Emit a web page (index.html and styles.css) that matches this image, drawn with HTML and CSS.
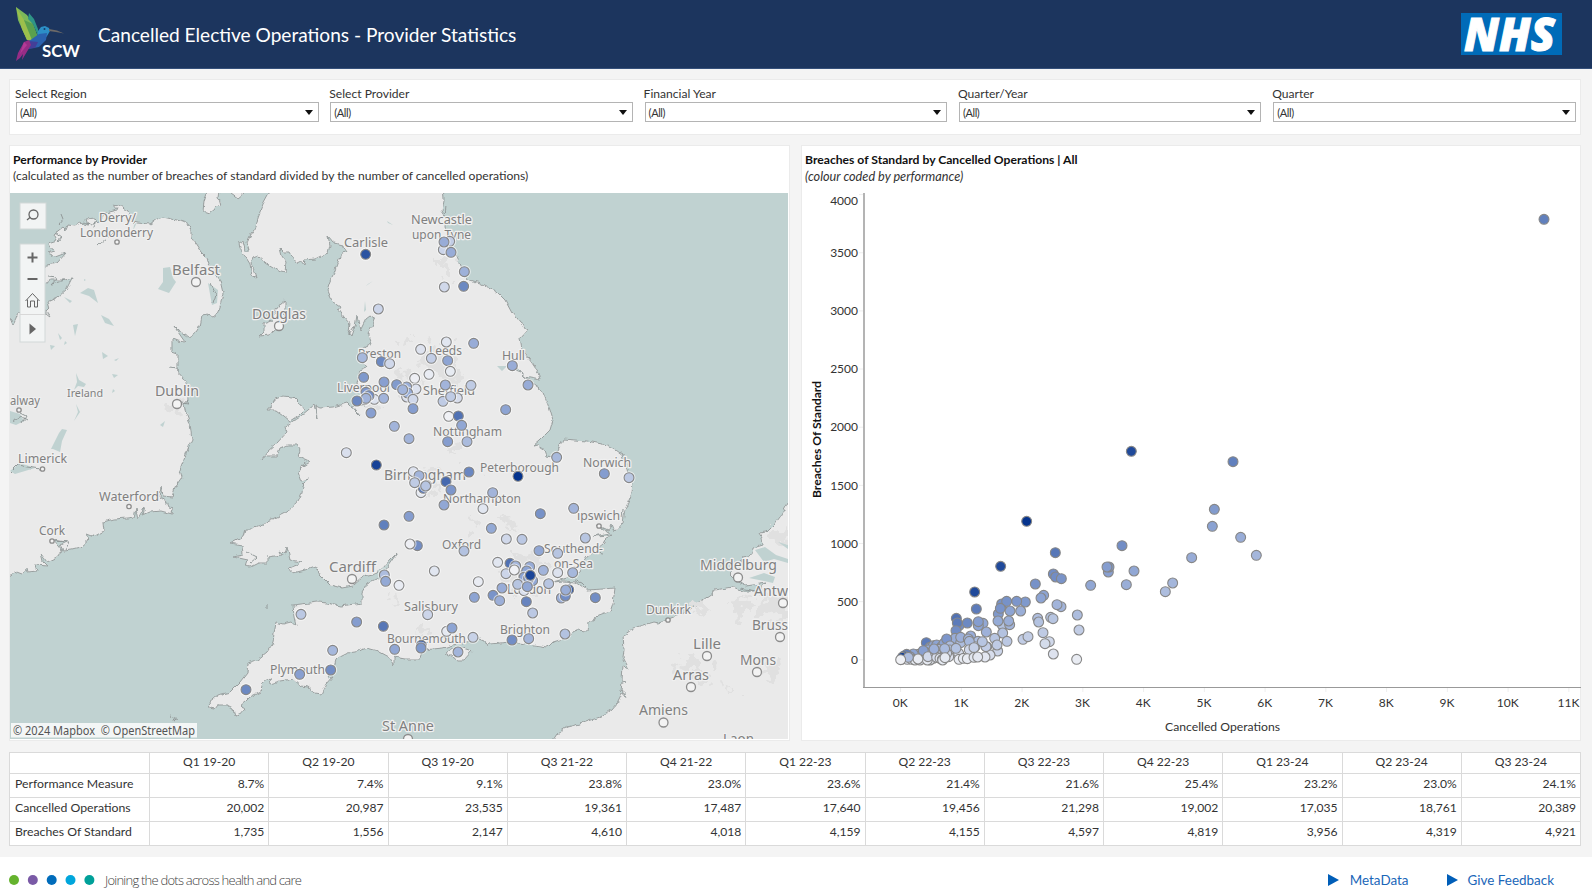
FILE: index.html
```html
<!DOCTYPE html>
<html lang="en">
<head>
<meta charset="utf-8">
<title>Cancelled Elective Operations - Provider Statistics</title>
<link rel="stylesheet" href="styles.css">
</head>
<body>
<header class="top">
  <svg class="scw" width="70" height="60" viewBox="14 4 70 60">
    <path fill="#7cb85a" d="M16 7 27 15 33 24 38 38 35 42 27 40 22 29 18 20z"/>
    <path fill="#9cbf4c" d="M16 7 24 20 32 40 27 40 22 29z"/>
    <path fill="#5aa04e" d="M24 20 33 24 38 38 32 40z"/>
    <path fill="#2f9586" d="M29 13 34 19 38 29 38 36 33 24 28 19z"/>
    <path fill="#2c8fc6" d="M38 31 41 27 45 26 49 28 50 31 47 36 43 41 37 41z"/>
    <path fill="#2a62ae" d="M39 34 47 33 46 40 39 47 28 49 29 41z"/>
    <path fill="#433f98" d="M29 41 38 42 35 48 26 49z"/>
    <path fill="#962d86" d="M29 40 24 42 18 53 16 61 20 58 23 54 22 60 28 50 31 45z"/>
    <path fill="#b43a96" d="M24 42 20 54 27 45z"/>
    <circle cx="44.500" cy="29" r="1" fill="#123a6a"/>
    <path fill="#6d6a68" d="M49 29 57 30.5 64 33.5 56 32 49 31z"/>
    <text class="scw-text" x="42" y="56.500" textLength="38" lengthAdjust="spacingAndGlyphs">SCW</text>
  </svg>
  <h1>Cancelled Elective Operations - Provider Statistics</h1>
  <svg class="nhs" width="101" height="42" viewBox="0 0 101 42">
    <rect width="101" height="42" fill="#006bb8"/>
    <text class="nhs-text" x="3" y="37.500" textLength="91" lengthAdjust="spacingAndGlyphs">NHS</text>
  </svg>
</header>

<main>
  <section class="panel filters">
    <label>Select Region<span class="select">(All)<i></i></span></label>
    <label>Select Provider<span class="select">(All)<i></i></span></label>
    <label>Financial Year<span class="select">(All)<i></i></span></label>
    <label>Quarter/Year<span class="select">(All)<i></i></span></label>
    <label>Quarter<span class="select">(All)<i></i></span></label>
  </section>

  <div class="charts">
    <section class="panel map-panel">
      <h2>Performance by Provider</h2>
      <p>(calculated as the number of breaches of standard divided by the number of cancelled operations)</p>
      <svg class="map" width="778" height="546" viewBox="10 193 778 546">
        <defs>
          <filter id="coast" filterUnits="userSpaceOnUse" x="0" y="183" width="798" height="566"><feTurbulence type="fractalNoise" baseFrequency=".16" numOctaves="2" seed="4"/><feDisplacementMap in="SourceGraphic" scale="5" xChannelSelector="R" yChannelSelector="G"/></filter>
          <filter id="sprawl" filterUnits="userSpaceOnUse" x="0" y="183" width="798" height="566"><feTurbulence type="fractalNoise" baseFrequency=".09" numOctaves="3" seed="9"/><feDisplacementMap in="SourceGraphic" scale="34" xChannelSelector="R" yChannelSelector="G"/></filter>
        </defs>
        <rect class="sea" x="10" y="193" width="778" height="546"/>
        <g class="land" filter="url(#coast)">
          <path d="M0 318 10 318 13 325 16 319 18 313 27 311 28 306 37 316 46 311 50 317 45 313 49 309 47 302 58 297 66 290 72 278 65 280 50 280 37 287 27 280 33 267 47 265 57 263 66 253 55 257 47 253 54 251 48 243 57 240 54 234 63 227 66 230 68 225 75 226 80 223 88 225 86 219 95 218 99 222 105 213 118 210 113 204 119 205 128 212 133 222 138 223 150 224 157 219 163 217 172 219 183 222 189 225 191 231 191 237 195 243 201 252 207 258 209 265 213 270 220 280 223 293 220 307 217 314 213 317 208 315 202 316 200 327 196 333 188 337 178 330 174 326 178 332 185 342 177 341 172 339 172 352 178 354 178 372 184 379 187 383 188 400 184 403 185 410 190 423 192 440 189 446 185 457 180 470 182 477 175 487 172 497 163 496 161 486 160 497 167 502 169 507 173 508 172 514 161 511 150 512 143 515 145 507 138 519 136 509 134 517 127 518 114 519 103 522 104 531 95 536 87 533 89 539 80 547 72 549 63 550 60 545 66 542 54 540 62 550 58 557 47 562 41 554 43 562 47 566 35 565 37 571 28 572 27 568 22 574 14 571 10 576 0 578z"/>
          <path d="M269 183 269 193 263 204 258 217 256 227 250 236 247 243 249 250 245 250 243 241 239 243 240 249 245 256 250 264 252 275 257 278 255 271 251 263 253 258 258 256 265 262 273 267 281 272 285 273 286 262 282 256 280 248 284 252 289 252 292 257 297 263 301 261 304 265 305 260 315 259 323 255 328 253 330 245 328 236 334 243 342 245 347 252 341 253 338 262 334 273 330 281 327 290 330 297 334 303 340 307 338 310 343 317 349 324 348 331 352 336 355 327 357 315 360 331 363 325 366 319 370 316 375 319 372 327 368 333 372 343 366 346 361 350 358 357 367 367 360 370 357 383 362 393 367 405 352 406 360 416 347 403 333 407 320 408 316 406 317 419 314 405 302 415 290 423 285 427 287 432 277 443 267 452 262 459 266 456 277 456 280 448 287 445 297 445 300 450 298 457 309 462 303 466 305 462 298 472 301 481 309 479 303 485 302 493 297 503 287 512 277 517 267 521 265 524 253 529 245 529 243 536 230 543 242 545 243 555 233 557 247 560 245 566 250 567 258 563 267 563 267 557 282 555 280 551 285 554 287 547 290 560 302 562 297 565 289 568 293 573 305 570 315 566 320 575 330 585 342 588 353 586 363 577 373 575 383 568 390 560 397 553 388 566 384 575 378 578 368 583 362 593 362 603 340 606 327 603 317 602 293 605 294 617 296 626 291 622 283 624 276 622 274 633 273 643 267 652 257 660 248 663 247 673 240 682 230 692 218 695 209 702 210 708 215 709 218 705 227 705 233 708 234 715 238 716 245 708 240 706 245 702 250 697 260 692 263 683 269 678 270 684 280 681 293 679 301 686 308 687 315 693 322 694 327 684 333 677 328 678 334 667 336 660 338 658 348 653 355 652 367 648 378 651 389 657 394 666 394 657 405 659 420 659 423 650 443 648 453 645 467 642 480 638 485 640 488 647 490 644 510 642 527 644 548 647 553 642 570 637 576 630 588 631 589 622 599 616 610 612 613 603 615 588 603 589 587 590 576 582 563 581 553 582 567 578 578 573 583 563 587 557 597 550 605 543 606 538 613 535 593 536 609 533 597 525 608 530 611 524 614 532 623 522 625 510 632 493 633 483 628 473 623 455 615 449 607 445 587 441 563 439 558 450 553 457 547 456 545 450 537 445 533 446 540 440 550 430 553 420 550 410 542 390 532 383 520 372 507 367 517 368 525 377 540 380 538 372 532 363 522 350 520 338 528 329 520 323 512 313 505 300 497 292 480 283 467 279 462 270 457 257 452 247 445 227 446 217 442 211 444 200 443 183z"/>
          <path d="M268 410 275 399 284 396 293 397 299 403 304 410 299 415 290 421 284 416 276 410z"/>
          <path d="M285 300 281 303 276 310 272 320 264 323 264 332 260 336 268 335 273 332 283 323 285 313z"/>
          <path d="M445 653 453 649 463 648 472 651 464 660 458 660z"/>
          <path d="M210 183 204 202 203 211 209 213 215 208 220 205 218 198 220 183zM231 185 231 193 238 198 244 193 244 185z"/>
          <path d="M798 485 788 502 780 517 774 525 767 532 759 533 762 538 763 545 753 548 752 555 743 557 740 565 730 574 737 581 746 586 766 583 757 591 743 591 733 587 715 590 713 593 700 602 683 613 670 618 658 623 653 622 633 628 623 635 624 650 623 657 629 669 622 665 621 681 627 682 622 683 621 691 628 697 622 693 617 703 612 709 600 717 583 723 567 727 557 734 547 749 798 749z"/>
        </g>
        <g class="urban" filter="url(#sprawl)">
          <path d="M425 350 440 344 457 348 455 362 462 370 455 387 443 384 434 370 423 365zM360 390 373 393 378 388 384 395 378 406 368 407zM396 373 410 372 417 380 412 395 402 396 395 386zM415 474 430 469 440 480 430 492 416 489zM503 565 515 552 537 553 548 565 547 580 536 590 514 590 501 580zM440 260 449 260 451 270 447 279 440 272zM446 429 456 428 456 442 447 443zM162 404 176 402 182 409 178 414 166 412zM736 598 750 604 740 620 733 613zM675 660 691 655 700 668 715 672 704 682 684 673zM757 600 788 591 788 616 775 622 760 616zM770 535 788 522 788 545 774 546zM447 446 455 445 457 452 449 455zM690 606 705 603 712 610 700 615zM470 520 478 518 480 526 472 529zM505 520 512 516 514 526 507 528zM400 340 408 338 408 345 402 347zM420 630 430 628 430 634 422 636zM725 690 735 688 735 695zM760 665 778 660 784 672 768 676zM490 470 497 468 498 476 491 478zM385 600 392 598 394 604z"/>
        </g>
        <g class="water">
          <path d="M163 268 170 267 173 278 176 282 169 293 158 289 163 282zM80 293 88 288 94 290 98 303 89 296zM64 297 72 301 70 303zM73 325 78 324 75 336zM101 315 109 319 114 326 105 323zM102 352 108 356 103 359zM58 333 62 338 60 340zM65 341 67 343 64 345zM10 411 20 414 24 421 16 425 10 423zM51 449 59 433 62 429 67 430 62 441 60 452 53 449zM76 373 79 380 86 384 84 387 78 386 74 390 77 382zM76 404 80 412 74 421 78 412zM112 374 118 375 114 378zM113 389 115 391 112 393zM114 360 119 358 116 361zM84 279 86 280 84 281zM50 345 55 346 51 350zM10 471 20 463 35 468 15 474zM208 283 218 290 217 303 212 305zM134 225 137 222 133 231zM160 425 165 421 163 427zM387 221 393 225 388 223zM365 301 366 310 364 312zM366 286 373 281 368 284z"/>
          <path d="M755 550 765 547 776 555 788 559 788 563 774 559 764 562zM749 578 764 573 775 577 773 583 764 581zM778 542 788 545 788 549zM497 366 507 366 502 371z"/>
        </g>
        <g class="inlet" filter="url(#coast)">
          <path d="M98 245 107 237 116 231M58 225 63 219 61 214M48 277 57 278 52 284 65 280M211 283 216 294 213 304M169 367 178 368 178 375M187 400 189 403 182 402M10 473 18 465 27 467 40 469M20 413 26 416 22 423M53 541 69 542 65 549M350 322 349 334 354 327M446 206 445 217 451 220M592 551 603 553M575 580 582 583 586 587M247 552 257 557 250 563M170 716 178 719 173 722 175 716M267 604V609M623 510 622 517M740 588 757 591M55 232 62 237 58 242M84 222 92 226 97 219 94 228M12 422 22 417 27 420"/>
        </g>
        <g class="towns">
          <circle cx="196" cy="282" r="4.500"/><circle cx="279" cy="326" r="4.500"/><circle cx="177" cy="404" r="4.500"/><circle cx="352" cy="579" r="4.500"/><circle cx="738" cy="577.500" r="4.500"/><circle cx="783" cy="603" r="4.500"/><circle cx="780" cy="637" r="4.500"/><circle cx="757" cy="672" r="4.500"/><circle cx="707" cy="656" r="4.500"/><circle cx="691" cy="687" r="4.500"/><circle cx="663.500" cy="722.500" r="4.500"/><circle cx="408" cy="739" r="4.500"/>
          <circle cx="117" cy="242" r="2.200"/><circle cx="129" cy="506.500" r="2.200"/><circle cx="52" cy="541" r="2.200"/><circle cx="42.500" cy="469" r="2.200"/><circle cx="19" cy="410" r="2.200"/><circle cx="668" cy="620" r="2.200"/><circle cx="599" cy="526" r="2.200"/>
        </g>
        <g class="names" id="names"></g>
        <g class="dots" id="map-dots"></g>
        <g class="tools">
          <rect x="20" y="203" width="26" height="26"/>
          <rect x="20" y="244" width="25" height="98"/>
          <path class="rule" d="M20 314.500H45"/>
          <path class="ico" d="M27 220 30.500 217"/><circle class="ico" cx="33.500" cy="214.500" r="4.500"/>
          <path class="ico thick" d="M27.500 257.500H37.500M32.500 252.500V262.500M27.500 279H37.500"/>
          <path class="ico thin" d="M25.500 301 32.500 293.500 39.500 301M27.500 299.500V307H30.500V301H34.500V307H37.500V299.500"/>
          <path fill="#666" d="M29.500 323.500 36 329 29.500 334.500z"/>
        </g>
        <g class="credit"><rect x="11" y="723" width="186" height="14.500"/><text x="13" y="735" textLength="182" lengthAdjust="spacingAndGlyphs" xml:space="preserve">© 2024 Mapbox  © OpenStreetMap</text></g>
      </svg>
    </section>

    <section class="panel scatter-panel">
      <h2>Breaches of Standard by Cancelled Operations | All</h2>
      <p class="it">(colour coded by performance)</p>
      <svg class="scatter" width="779" height="546" viewBox="802 193 779 546">
        <path class="axis-y" d="M864 193V688"/>
        <path class="axis-x" d="M863 687.500H1581"/>
        <g class="ticks" id="ticks"></g>
        <text class="xtitle" x="1165" y="731" textLength="115" lengthAdjust="spacingAndGlyphs">Cancelled Operations</text>
        <text class="ytitle" transform="translate(821 498) rotate(-90)" textLength="117" lengthAdjust="spacingAndGlyphs">Breaches Of Standard</text>
        <g class="dots" id="scatter-dots"></g>
      </svg>
    </section>
  </div>

  <table>
    <thead><tr><th></th><th>Q1 19-20</th><th>Q2 19-20</th><th>Q3 19-20</th><th>Q3 21-22</th><th>Q4 21-22</th><th>Q1 22-23</th><th>Q2 22-23</th><th>Q3 22-23</th><th>Q4 22-23</th><th>Q1 23-24</th><th>Q2 23-24</th><th>Q3 23-24</th></tr></thead>
    <tbody>
      <tr><th>Performance Measure</th><td>8.7%</td><td>7.4%</td><td>9.1%</td><td>23.8%</td><td>23.0%</td><td>23.6%</td><td>21.4%</td><td>21.6%</td><td>25.4%</td><td>23.2%</td><td>23.0%</td><td>24.1%</td></tr>
      <tr><th>Cancelled Operations</th><td>20,002</td><td>20,987</td><td>23,535</td><td>19,361</td><td>17,487</td><td>17,640</td><td>19,456</td><td>21,298</td><td>19,002</td><td>17,035</td><td>18,761</td><td>20,389</td></tr>
      <tr><th>Breaches Of Standard</th><td>1,735</td><td>1,556</td><td>2,147</td><td>4,610</td><td>4,018</td><td>4,159</td><td>4,155</td><td>4,597</td><td>4,819</td><td>3,956</td><td>4,319</td><td>4,921</td></tr>
    </tbody>
  </table>
</main>

<footer>
  <svg width="90" height="12" viewBox="0 0 90 12"><circle cx="5" cy="6" r="5" fill="#65b32e"/><circle cx="23.800" cy="6" r="5" fill="#7a5aa6"/><circle cx="42.700" cy="6" r="5" fill="#006cbb"/><circle cx="61.500" cy="6" r="5" fill="#00a6dc"/><circle cx="80.400" cy="6" r="5" fill="#00a099"/></svg>
  <span class="motto">Joining the dots across health and care</span>
  <a class="meta"><i></i>MetaData</a>
  <a class="feed"><i></i>Give Feedback</a>
</footer>
<script src="script.js"></script>
</body>
</html>
```

FILE: styles.css
```css
* { box-sizing: border-box; }
body { margin: 0; width: 1592px; height: 893px; overflow: hidden; background: #f4f4f4; color: #333; font-family: Lato, "Liberation Sans", sans-serif; font-size: 12.100px; }
h1, h2, p { margin: 0; font-weight: normal; }
.top { height: 69px; display: flex; align-items: center; background: #1c355e; border-bottom: 1px solid #35507a; padding: 0 30px 0 14px; }
.scw { flex: none; }
.scw-text { font: 700 17px Lato, sans-serif; fill: #fff; }
.top h1 { color: #fff; font-size: 19.100px; margin-left: 14px; flex: 1; white-space: nowrap; }
.nhs { flex: none; overflow: visible; }
.nhs-text { font: italic 800 46px "Open Sans", sans-serif; fill: #fff; stroke: #fff; stroke-width: 1; }
main { padding: 10px 11px 0 9px; height: 788px; }
.panel { background: #fff; border: 1px solid #ebebeb; }
.filters { height: 56px; display: grid; grid-template-columns: repeat(5, 302.500px); column-gap: 11.800px; padding: 5px 0 0 6px; }
.filters label { display: flex; flex-direction: column; line-height: 17px; color: #333; text-indent: -1px; }
.select { height: 20px; border: 1px solid #b4b4b4; line-height: 17px; padding-left: 3px; font-size: 11px; display: flex; justify-content: space-between; align-items: center; text-indent: 0; letter-spacing: -.4px; }
.select i { border: 4px solid transparent; border-width: 5px 4px 0; border-top-color: #111; margin-right: 5px; }
.charts { display: flex; gap: 11px; margin-top: 10px; height: 596px; }
.map-panel { width: 781px; }
.scatter-panel { width: 780px; }
.charts h2 { font-weight: 700; font-size: 12.150px; color: #111; line-height: 16px; margin: 6px 0 0 3px; }
.charts p { line-height: 16px; margin: 0 0 9px 3px; white-space: nowrap; font-size: 12.150px; }
.charts .it { font-style: italic; font-size: 12.700px; }
.map, .scatter { display: block; }
.map { margin-left: -.5px; }
.sea { fill: #c0d2d1; }
.land path { fill: #eaeaea; stroke: #999f9f; stroke-width: 1; stroke-linejoin: round; }
.urban { fill: #e0e0e0; }
.water { fill: #c0d2d1; }
.inlet { fill: none; stroke: #929999; stroke-width: 1; }
.towns circle { fill: #f3f3f3; stroke: #8c8c8c; stroke-width: 1.300; }
.names text { font-family: "Noto Sans", sans-serif; fill: #808080; stroke: #f0f0f0; stroke-width: 2.500; paint-order: stroke; stroke-linejoin: round; }
.dots circle { stroke: #878787; stroke-width: 1.100; }
.dots .halo { stroke: none; fill: #fff; fill-opacity: .6; }
.tools rect { fill: #f2f4f4; stroke: #d2d8d8; stroke-width: 1; }
.tools .rule { stroke: #d8d8d8; }
.tools .ico { fill: none; stroke: #666; stroke-width: 1.300; }
.tools .thick { stroke-width: 2; }
.tools .thin { stroke-width: 1; }
.credit rect { fill: #f3f6f6; }
.credit text { font: 12px "Noto Sans", sans-serif; fill: #555; }
.axis-y { stroke: #b4b4b4; stroke-width: 2; }
.axis-x { stroke: #999; stroke-width: 1; }
.ticks text { font-size: 12px; fill: #333; }
.ticks path { stroke: #eee; }
.xtitle { font-size: 12px; fill: #333; }
.ytitle { font-size: 12px; fill: #111; font-weight: 700; }
table { border-collapse: collapse; table-layout: fixed; width: 1572px; margin-top: 11px; background: #fff; }
th, td { border: 1px solid #dadada; padding: 0 4px 2px 3px; font-weight: normal; height: 24.200px; line-height: 20px; }
thead th { height: 20.500px; text-align: center; padding: 0 3px 1px; line-height: 18px; }
thead th:first-child { width: 140px; }
tbody th { text-align: left; padding-left: 5px; white-space: nowrap; font-size: 12.250px; }
td { text-align: right; }
footer { height: 36px; background: #fff; display: flex; align-items: center; padding: 9px 38px 0 9px; }
.motto { font: 300 13px "Open Sans", sans-serif; letter-spacing: -.770px; color: #444; margin-left: 6px; flex: 1; }
footer a { color: #1a66b8; font-size: 13.450px; display: flex; align-items: center; }
footer i { border: 6px solid transparent; border-width: 6px 0 6px 11px; border-left-color: #005eb8; margin-right: 11px; }
footer .feed { margin-left: 38px; }
footer .feed i { margin-right: 10px; }
```

FILE: script.js
```js
const NS = 'http://www.w3.org/2000/svg';
function add(parent, tag, attrs, text) {
  const el = document.createElementNS(NS, tag);
  for (const k in attrs) el.setAttribute(k, attrs[k]);
  if (text) el.textContent = text;
  parent.appendChild(el);
  return el;
}
const stops = [[246, 246, 247], [141, 164, 211], [5, 51, 141]];
function shade(v) {
  const i = v < 5 ? 0 : 1, t = (v - i * 5) / 5;
  return 'rgb(' + stops[i].map((c, n) => Math.round(c + (stops[i + 1][n] - c) * t)).join(',') + ')';
}
// Points are x, y, performance (0-10); x and y in thirds of a pixel from the origin.
function plot(id, ox, oy, pts, halo) {
  const g = document.getElementById(id);
  for (let i = 0; i < pts.length; i += 3) {
    const cx = ox + pts[i] / 3, cy = oy + pts[i + 1] / 3;
    if (halo) add(g, 'circle', { cx, cy, r: 6.5, class: 'halo' });
    add(g, 'circle', { cx, cy, r: 4.95, fill: shade(pts[i + 2]) });
  }
}
plot('map-dots', 320, 190, [
  137,193,8.6, 389,154,2.5, 370,179,2, 372,156,4.5, 393,187,4.5, 433,245,4.2, 373,291,1.8, 431,289,6.2, 175,357,2,
  379,456,1, 302,478,1.2, 461,460,4.5, 334,505,2.5, 383,512,5, 391,544,.7, 327,553,.6, 284,565,.4, 577,527,4.5, 624,585,4.5,
  127,503,3.8, 184,515,6.2, 209,521,1.8, 131,562,5.5, 192,576,5.2, 376,585,4, 453,586,2.6, 288,597,1.2,
  260,621,1.5, 260,591,4.4, 263,609,4.6, 279,628,1.8, 230,584,5.4, 248,599,4, 279,656,5.3, 163,628,1.2, 138,607,5.6, 147,617,6, 134,629,5, 138,625,4, 111,633,6.3, 191,625,4,
  412,624,1.5, 369,634,2.6, 392,620,2.6, 153,669,5.2, 557,659,5, 386,679,.3, 415,678,7.2, 425,706,4.8, 223,709,4, 267,746,4, 383,755,5.3, 441,755,3.6, 79,788,1.4, 710,802,3.7
], true);
plot('map-dots', 320, 440, [
  169,75,9.3, 280,95,1.2, 297,107,4, 303,158,.8, 310,145,7, 320,136,3, 284,128,2.6, 317,138,3, 447,96,6.3, 378,125,7.6, 393,150,5.6, 372,195,4.8, 518,158,4, 594,109,10, 853,101,5.3, 927,113,2.8,
  489,206,1, 661,221,5.8, 761,205,4, 267,229,5.3, 192,255,6.6, 514,265,4.7, 292,317,6, 270,312,.4, 432,333,3.2, 559,297,1.8, 606,298,2.8, 796,294,3, 657,332,4.8, 713,340,3,
  193,405,3.5, 197,424,4.7, 237,436,.6, 343,393,1, 533,367,1, 570,370,7.2, 587,378,4, 629,380,4.5, 558,401,2, 610,405,5, 620,393,5, 612,412,5, 638,422,4.8, 626,415,5.8, 583,390,.3, 631,406,9.2, 670,391,4, 475,425,.6,
  612,452,1.3, 593,433,3, 622,440,4.8, 686,431,3, 713,398,1.2, 758,398,3.8, 463,472,5, 546,444,4.5, 519,466,5.7, 539,482,4.3, 619,485,6.4, 638,519,2.8, 724,474,4.4, 746,449,8.6, 736,468,6, 737,450,4.4, 826,473,6,
  323,524,2, 110,546,5.3, 190,559,7, 380,574,.8, 396,564,5, 459,592,2.2, 304,616,8.8, 303,624,5.5, 224,628,4.8, 414,636,4, 576,600,6, 626,596,4, 735,582,3.2, 38,631,3.8, 32,690,6, -57,523,2.8, -61,703,5.2, -222,749,6.2
], true);

const names = [['Derry/',99,222,37,13],['Londonderry',80,237,73,13],['Belfast',172,275,48,14.5],['Douglas',252,319,54,14.5],['Carlisle',344,247,44,12.5],
['Newcastle',411,224,61,12.5],['upon Tyne',412,239,59,12.5],['Dublin',155,396,44,14.5],['Ireland',67,397,36,11.5],['alway',10,405,30,12.5],['Limerick',18,463,49,12.5],
['Waterford',99,501,60,12.5],['Cork',39,535,26,12.5],['Preston',358,358,43,12.5],['Leeds',429,355,33,12.5],['Hull',502,360,23,12.5],['Liverpool',337,392,53,12.5],['Sheffield',423,395,52,12.5],
['Nottingham',433,436,69,12.5],['Peterborough',480,472,79,12.5],['Norwich',583,467,48,12.5],['Birmingham',384,480,82,14.5],['Northampton',443,503,78,12.5],['ipswich',577,520,43,12.5],
['Oxford',442,549,39,12.5],['Southend-',544,553,59,12.5],['on-Sea',554,568,39,12.5],['Cardiff',329,572,47,14.5],['London',507,594,44,14.5],['Salisbury',404,611,54,12.5],['Bournemouth',387,643,79,12.5],
['Brighton',500,634,50,12.5],['Plymouth',270,674,55,12.5],['St Anne',382,731,52,14.5],['Middelburg',700,570,77,14.5],['Antw',754,596,34,14.5],['Dunkirk',646,614,45,12.5],['Bruss',752,630,36,14.5],
['Lille',693,649,28,14.5],['Mons',740,665,36,14.5],['Arras',673,680,36,14.5],['Amiens',639,715,49,14.5],['Laon',723,744,31,14.5]];
for (const [t, x, y, w, s] of names)
  add(document.getElementById('names'), 'text', { x, y, textLength: w, lengthAdjust: 'spacingAndGlyphs', 'font-size': s }, t);

const ticks = document.getElementById('ticks');
for (let i = 0; i <= 11; i++) {
  const x = 900.6 + i * 60.75;
  add(ticks, 'path', { d: `M${x} 688V692` });
  add(ticks, 'text', { x: x - .3, y: 706.5, 'text-anchor': 'middle' }, i + 'K');
}
for (let i = 0; i <= 8; i++) {
  const y = 659.8 - i * 58.15;
  add(ticks, 'path', { d: `M859 ${y}H863` });
  add(ticks, 'text', { x: 858, y: (i === 8 ? 200.3 : y) + 4.2, 'text-anchor': 'end' }, String(i * 500));
}

plot('scatter-dots', 860, 440, [
  500,244,10, 586,338,7, 422,379,9, 344,456,9, 349,507,6.8, 526,432,5.8, 580,402,6, 587,411,6, 604,416,5.7, 692,436,4.8, 745,396,5.2, 747,381,5.5, 741,381,5.3, 786,317,6,
  551,466,5, 543,474,5, 603,500,4, 591,494,4, 652,525,3.5, 657,570,2.5, 650,658,.6, 580,642,1.2, 568,605,1.8, 555,611,1.6, 549,578,2.6, 533,535,3.4, 536,546,3.2, 572,532,3, 579,536,3, 489,598,2.5, 504,590,2.5,
  496,486,5.5, 470,484,5.6, 425,492,5.8, 440,484,5.8, 415,522,5.5, 421,505,5.7, 450,513,5, 482,513,4.4, 427,555,3.2, 449,554,4, 414,543,4.6, 446,543,4.4, 428,579,3.2,
  289,535,7.2, 298,556,6, 292,549,6.8, 322,549,6.2, 288,572,6, 369,550,4.8, 355,557,5, 355,545,5.3, 379,576,4.2,
  199,608,6.8, 210,622,5.5, 220,617,5, 230,615,5, 245,620,5, 252,610,5, 270,605,4, 285,595,4.5, 260,597,5.6, 302,608,3.5, 302,592,4.3, 332,588,4.5, 325,597,4, 345,608,3, 354,604,3.5, 345,620,2.5, 380,620,2.5, 404,595,3, 413,633,2, 390,645,1.5, 378,620,2.5, 367,605,3, 328,604,3.8, 328,629,1.8, 342,623,2.4, 411,615,2.6, 441,604,2.8,
  270,618,3.6, 270,630,3, 240,636,2, 266,650,1.2, 235,628,3.4, 222,630,4.6, 205,630,4.6, 212,642,3, 220,655,1.4, 195,636,4, 185,640,4, 185,650,3, 175,643,3.6, 168,655,2, 160,642,5, 150,650,5, 140,643,6.8, 148,655,4, 133,652,4, 125,658,4, 132,648,8, 142,658,1, 127,652,9.5, 155,658,1, 165,660,.8, 190,632,5.2, 180,660,1, 210,660,.8, 202,660,.8, 204,650,1.8, 227,640,2.5, 230,652,1.5, 222,627,4.2, 240,655,1, 247,658,.8, 248,660,.8, 260,640,2, 254,626,3.6, 255,653,.8,
  296,640,1.5, 297,658,.6, 288,625,3.2, 174,657,.6, 310,655,.7, 322,656,.6, 342,652,1, 375,651,.9, 353,651,.9, 145,652,3.5, 122,659,.3
]);
plot('scatter-dots', 1080, 420, [
  154,94,9, 459,125,6.6, 403,268,5.4, 397,319,5.1, 482,352,4.5, 529,406,3.9, 335,413,4.5, 162,453,4.8, 139,494,4.4, 278,489,3.9, 256,515,3.5, 1392,-602,6.6
]);
```
